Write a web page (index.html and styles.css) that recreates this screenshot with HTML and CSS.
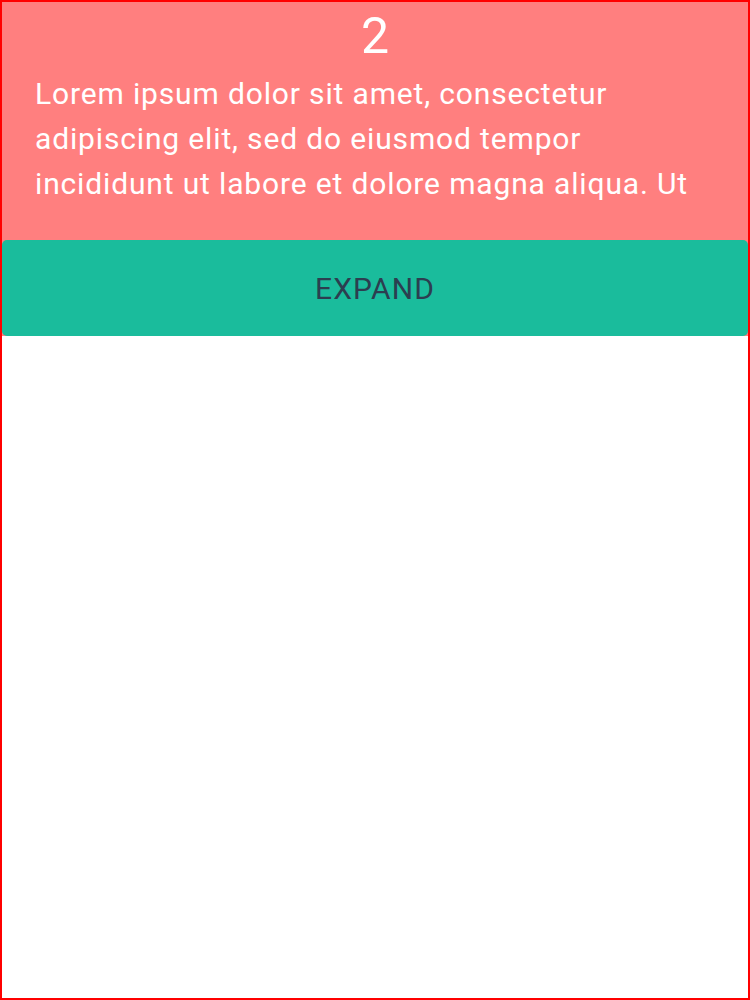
FILE: index.html
```html
<!DOCTYPE html>
<html>
<head>
<meta charset="utf-8">
<link rel="stylesheet" href="styles.css">
</head>
<body>
<div class="frame">
  <div class="panel">
    <div class="num">2</div>
    <div class="clip">
      <p class="text">Lorem ipsum dolor sit amet, consectetur adipiscing elit, sed do eiusmod tempor incididunt ut labore et dolore magna aliqua. Ut enim ad minim veniam, quis nostrud exercitation ullamco laboris nisi ut aliquip ex ea commodo consequat.</p>
    </div>
    <button class="expand">EXPAND</button>
  </div>
</div>
</body>
</html>
```
FILE: styles.css
```css
html, body {
  margin: 0;
  padding: 0;
}
body {
  font-family: Roboto, "Liberation Sans", sans-serif;
}
.frame {
  width: 750px;
  height: 1000px;
  box-sizing: border-box;
  border: 2px solid #ff0000;
  display: flex;
  flex-direction: column;
}
.panel {
  background: #ff7f7f;
  color: #ffffff;
  padding-top: 5px;
  flex: none;
  display: flex;
  flex-direction: column;
}
.num {
  text-align: center;
  font-size: 50px;
  line-height: 58px;
}
.clip {
  height: 135px;
  overflow: hidden;
  margin: 6px 33px 34px 33px;
}
.text {
  margin: 0;
  font-size: 30px;
  line-height: 45px;
  letter-spacing: 0.85px;
}
.expand {
  flex: none;
  height: 96px;
  width: 100%;
  border: none;
  border-radius: 5px;
  background: #1abc9c;
  color: #2c3e50;
  font-family: Roboto, "Liberation Sans", sans-serif;
  font-size: 30px;
  letter-spacing: 1.1px;
  margin: 0;
  padding: 0;
}
```
